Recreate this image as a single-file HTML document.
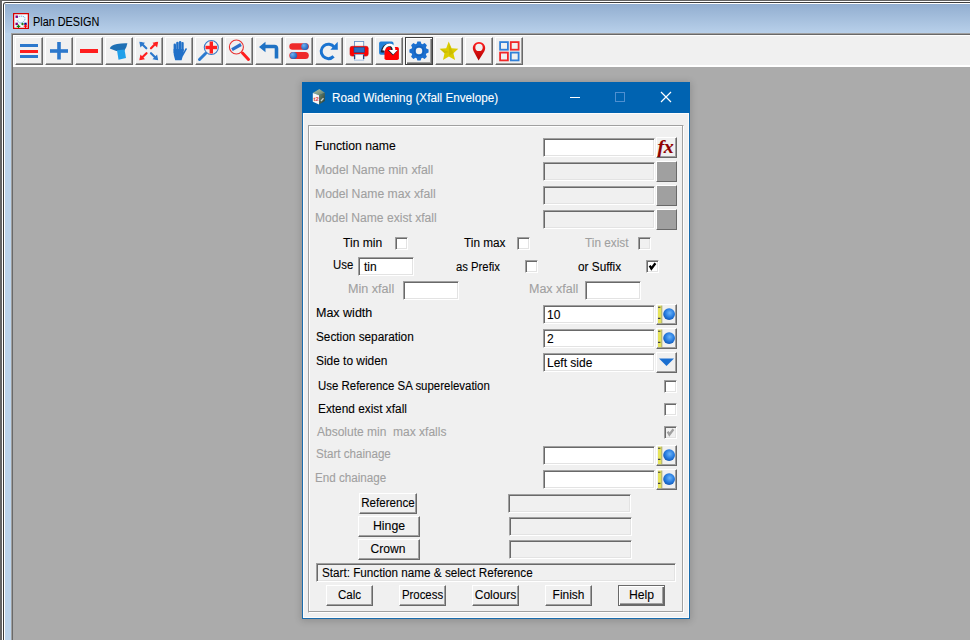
<!DOCTYPE html>
<html><head><meta charset="utf-8">
<style>
*{box-sizing:border-box;margin:0;padding:0}
html,body{width:970px;height:640px;overflow:hidden;background:#ababab;font-family:"Liberation Sans",sans-serif;font-size:12px;color:#000}
.a{position:absolute}
.t{position:absolute;white-space:pre;line-height:14px;font-size:12px;-webkit-text-stroke:0.1px currentColor}
.dis{color:#a0a0a0}
/* toolbar button */
.tb{position:absolute;top:37px;width:28px;height:28px;background:#f0f0f0;border-top:1px solid #fff;border-left:1px solid #fff;box-shadow:inset -1px -1px 0 #a0a0a0;border-right:1px solid #696969;border-bottom:1px solid #696969}
.tb svg{position:absolute;left:0;top:0}
/* sunken field */
.fld{position:absolute;background:#fff;border-top:1px solid #a0a0a0;border-left:1px solid #a0a0a0;border-right:1px solid #fff;border-bottom:1px solid #fff;box-shadow:inset 1px 1px 0 #696969,inset -1px -1px 0 #e3e3e3}
.fld.d{background:#f0f0f0}
/* raised button */
.btn{position:absolute;background:#f0f0f0;border-top:1px solid #fff;border-left:1px solid #fff;border-right:1px solid #696969;border-bottom:1px solid #696969;box-shadow:inset -1px -1px 0 #a0a0a0}
.chk{position:absolute;background:#fff;border-top:1px solid #a0a0a0;border-left:1px solid #a0a0a0;border-right:1px solid #fff;border-bottom:1px solid #fff;box-shadow:inset 1px 1px 0 #696969,inset -1px -1px 0 #e3e3e3}
.chk.d{background:#f0f0f0}
</style></head><body>
<!-- main window frame -->
<div class="a" style="left:0;top:0;width:970px;height:640px;background:#646464"></div>
<div class="a" style="left:2px;top:1px;width:968px;height:639px;background:#fff"></div>
<div class="a" style="left:3px;top:2px;width:967px;height:638px;background:#3c3c3c;border-top-left-radius:3px"></div>
<div class="a" style="left:4px;top:3px;width:966px;height:637px;background:#fff;border-top-left-radius:2px"></div>
<div class="a" style="left:5px;top:4px;width:965px;height:636px;background:#bcd4ec"></div>
<div class="a" style="left:5px;top:4px;width:965px;height:29px;background:linear-gradient(#92aed0,#b8d0ea)"></div>
<!-- title -->
<svg class="a" style="left:13px;top:13px" width="16" height="16">
<rect x="0.6" y="0.6" width="14.8" height="14.8" fill="#f4fbff" stroke="#d40000" stroke-width="1.3"/>
<path d="M4,4.5 Q7,2.5 10,3.5 Q13,4 11.5,7.5 Q10,10 7,10 Q5,9 4,7" fill="none" stroke="#58a0d8" stroke-width="1" stroke-dasharray="1.2 0.8"/>
<rect x="2.5" y="2.5" width="2.4" height="2.4" fill="#800080"/>
<rect x="2.5" y="9.7" width="2.4" height="2.4" fill="#800080"/>
<rect x="11.3" y="9.7" width="2.4" height="2.4" fill="#000090"/>
<circle cx="9.5" cy="11" r="1.2" fill="#208020"/>
<path d="M5.5,11.5v3.6M3.7,13.3h3.6" stroke="#108010" stroke-width="1.2"/>
<path d="M12.5,11.3v3.6M10.7,13.1h3.6" stroke="#ff0000" stroke-width="1.2"/>
</svg>
<div class="t" style="left:33px;top:15px;font-size:12px;color:#000;transform:scaleX(0.905);transform-origin:0 0">Plan DESIGN</div>
<!-- toolbar container -->
<div class="a" style="left:11px;top:33px;width:959px;height:607px;background:#a0a0a0"></div>
<div class="a" style="left:12px;top:34px;width:958px;height:606px;background:#696969"></div>
<div class="a" style="left:13px;top:35px;width:957px;height:32px;background:#fff"></div>
<div class="a" style="left:14px;top:36px;width:956px;height:29px;background:#f0f0f0"></div>
<div class="a" style="left:13px;top:67px;width:957px;height:573px;background:#ababab"></div>
<div id="tools">
<div class="tb" style="left:15px"></div>
<div class="tb" style="left:45px"></div>
<div class="tb" style="left:75px"></div>
<div class="tb" style="left:105px"></div>
<div class="tb" style="left:135px"></div>
<div class="tb" style="left:165px"></div>
<div class="tb" style="left:195px"></div>
<div class="tb" style="left:225px"></div>
<div class="tb" style="left:255px"></div>
<div class="tb" style="left:285px"></div>
<div class="tb" style="left:315px"></div>
<div class="tb" style="left:345px"></div>
<div class="tb" style="left:375px"></div>
<div class="tb" style="left:405px;border:1px solid #404040;box-shadow:inset 1px 1px 0 #fff,inset -1px -1px 0 #696969,inset -2px -2px 0 #a0a0a0"></div>
<div class="tb" style="left:435px"></div>
<div class="tb" style="left:465px"></div>
<div class="tb" style="left:495px"></div>
<svg class="a" style="left:0;top:0" width="970" height="70">
<defs>
<radialGradient id="bb" cx="0.35" cy="0.35" r="0.7"><stop offset="0" stop-color="#6fb0f0"/><stop offset="1" stop-color="#1a5fb8"/></radialGradient>
<linearGradient id="pin" x1="0" y1="0" x2="0" y2="1"><stop offset="0" stop-color="#ff2020"/><stop offset="1" stop-color="#b00000"/></linearGradient>
</defs>
<rect x="20" y="44" width="18" height="3" fill="#2c78cc"/><rect x="20" y="50" width="18" height="3" fill="#ff1e1e"/><rect x="20" y="55" width="18" height="3" fill="#2c78cc"/>
<rect x="50" y="49.2" width="18" height="3.6" fill="#2c78cc"/><rect x="57.2" y="42" width="3.6" height="17.5" fill="#2c78cc"/>
<rect x="80" y="49" width="18" height="4" fill="#ff1e1e"/>
<path d="M109.8,48.4 Q110.5,45.2 117,44 Q122,43.1 127.4,43.3 Q126.8,47.5 124.2,51 Q116,51.8 109.8,48.4Z" fill="#1f70b4"/>
<path d="M117,50.3 L124.5,49.6 L126,58 L118.5,59.8Z" fill="#20a0ea"/>
<g stroke-width="2.2" stroke-linecap="round">
<path d="M146.3,48.3 L141,43" stroke="#2c78cc"/><path d="M139.3,41.7 L145,42.8 L140.4,47.4Z" fill="#2c78cc"/>
<path d="M151,48.3 L156.3,43" stroke="#ff1e1e"/><path d="M158.2,41.7 L152.5,42.8 L157.1,47.4Z" fill="#ff1e1e"/>
<path d="M146.5,53.2 L141,58.5" stroke="#ff1e1e"/><path d="M139.3,60.3 L140.4,54.6 L145,59.2Z" fill="#ff1e1e"/>
<path d="M151,53.2 L156.3,58.5" stroke="#2c78cc"/><path d="M158.2,60.3 L157.1,54.6 L152.5,59.2Z" fill="#2c78cc"/>
</g>
<g fill="#2170c8"><rect x="173.6" y="43.6" width="2.4" height="10" rx="1.2"/><rect x="176.2" y="41.8" width="2.5" height="10" rx="1.25"/><rect x="178.9" y="40.9" width="2.5" height="10" rx="1.25"/><rect x="181.4" y="41.9" width="2.3" height="10" rx="1.15"/>
<path d="M173.6,49 L183.7,49 L183.5,52.5 L185.3,48.6 Q186.6,47.6 187,48.9 L182.6,56.8 L181.6,60.2 L175.2,60.2 L173.8,55Z"/></g>
<circle cx="211.3" cy="47.5" r="7" fill="none" stroke="#3a7ac8" stroke-width="1.1"/>
<rect x="205.5" y="45.8" width="11.5" height="3.4" fill="#ff1e1e"/><rect x="209.6" y="41.5" width="3.4" height="12" fill="#ff1e1e"/>
<path d="M199.5,59.5 L205.5,53.5" stroke="#2a7ad0" stroke-width="3" stroke-linecap="round"/>
<circle cx="236.4" cy="47" r="7" fill="none" stroke="#e83030" stroke-width="1.1"/>
<path d="M232,49.6 L241,44.5" stroke="#2a70c8" stroke-width="3.2"/>
<path d="M242.5,53 L248.5,59.5" stroke="#ff1e1e" stroke-width="3" stroke-linecap="round"/>
<path d="M276.5,58.5 L276.5,48.5 Q276.5,46.5 274.5,46.5 L264,46.5" fill="none" stroke="#1f72c4" stroke-width="3.6"/>
<path d="M259,47 L265.5,41.8 L265.5,52.2Z" fill="#1f72c4"/>
<rect x="289.3" y="43.3" width="19.5" height="6.5" rx="3.25" fill="#ee2a2a"/><circle cx="304.8" cy="46.5" r="3.6" fill="url(#bb)"/>
<rect x="289.3" y="52" width="19.5" height="7" rx="3.5" fill="#ee2a2a"/><circle cx="293.5" cy="55.5" r="3.6" fill="url(#bb)"/>
<path d="M334.2,47.2 A7.2,7.2 0 1 0 333.6,56.4" fill="none" stroke="#1a73d0" stroke-width="3"/>
<path d="M337.7,41.8 L337.8,49.8 L330.4,49.8Z" fill="#1a73d0"/>
<rect x="354.5" y="41.5" width="9.2" height="6" fill="#f8f8f8" stroke="#6a94c8" stroke-width="0.9"/>
<rect x="350" y="46.3" width="18.2" height="9.8" rx="2" fill="#ff0000" stroke="#c01010" stroke-width="0.6"/>
<rect x="354" y="47.3" width="10.4" height="5" fill="#2a70c0" stroke="#184c90" stroke-width="0.6"/>
<rect x="354.5" y="54.5" width="9.2" height="5.6" fill="#f8f8f8" stroke="#8fb0d8" stroke-width="0.8"/>
<path d="M354.6,54.5V59M363.6,54.5V59" stroke="#27457a" stroke-width="1.3"/>
<rect x="379.1" y="41.4" width="14.4" height="13.3" rx="1.8" fill="#2080d8"/>
<rect x="384.5" y="47" width="14.4" height="13" rx="1.8" fill="#ff0000"/>
<path d="M382,52.5 Q383.5,45.5 389,45.2 Q392.6,45.5 392.8,50.5" fill="none" stroke="#182838" stroke-width="3.2"/>
<path d="M383.6,50.5 Q385,45.2 389.5,44.8 Q394,45 394,50.5" fill="none" stroke="#fff" stroke-width="2.6"/>
<path d="M387.6,50 L398,50 L393,55.5Z" fill="#182838"/>
<path d="M388.8,50 L397.6,50 L393.2,54.6Z" fill="#fff"/>
<path d="M416.62,43.68 L417.41,41.43 L420.59,41.43 L421.38,43.68 L421.93,43.92 L422.50,44.14 L424.64,43.11 L426.89,45.36 L425.86,47.50 L426.08,48.07 L426.32,48.62 L428.57,49.41 L428.57,52.59 L426.32,53.38 L426.08,53.93 L425.86,54.50 L426.89,56.64 L424.64,58.89 L422.50,57.86 L421.93,58.08 L421.38,58.32 L420.59,60.57 L417.41,60.57 L416.62,58.32 L416.07,58.08 L415.50,57.86 L413.36,58.89 L411.11,56.64 L412.14,54.50 L411.92,53.93 L411.68,53.38 L409.43,52.59 L409.43,49.41 L411.68,48.62 L411.92,48.07 L412.14,47.50 L411.11,45.36 L413.36,43.11 L415.50,44.14 L416.07,43.92Z M419,47.8 A3.2,3.2 0 1 0 419,54.2 A3.2,3.2 0 1 0 419,47.8Z" fill="#1a6fd0" fill-rule="evenodd"/><circle cx="419" cy="51" r="4.6" fill="none" stroke="#1458a8" stroke-width="1.2" opacity="0.6"/>
<path d="M448.7,41.6 L451.6,48.3 L458.3,48.8 L453.4,53.2 L455.1,60 L448.9,56.4 L443,60 L444.5,53.2 L439.6,48.8 L446.2,48.3Z" fill="#dccc00"/>
<path d="M448.8,44 L449.2,55.5 L453.6,53.3Z M440.5,49 L449,52 L444.5,53.2Z" fill="#c0b000" opacity="0.55"/>
<path d="M478.6,60.6 L473.6,51.2 A6.2,6.2 0 1 1 484.4,51.2Z" fill="url(#pin)"/>
<circle cx="479" cy="47.4" r="3.7" fill="#f0f0f0"/>
<g fill="none" stroke-width="1.8">
<rect x="500.1" y="42.1" width="7.8" height="7.6" stroke="#3080d8"/>
<rect x="510.8" y="42.1" width="7.8" height="7.6" stroke="#f02828"/>
<rect x="500.1" y="52.6" width="7.8" height="7.8" stroke="#f02828"/>
<rect x="510.8" y="52.6" width="7.8" height="7.8" stroke="#3080d8"/>
</g>
</svg>
</div><!--/tools-->

<!-- dialog -->
<div class="a" style="left:302px;top:82px;width:388px;height:537px;background:#1a6cad;box-shadow:0 1px 7px 1px rgba(0,0,0,0.16)"></div>
<div class="a" style="left:302px;top:82px;width:388px;height:31px;background:#0063b1"></div>
<div class="a" style="left:303px;top:113px;width:386px;height:505px;background:#f0f0f0;border-top:1px solid #fcfcfc;border-left:1px solid #fcfcfc;border-right:1px solid #fcfcfc;border-bottom:1px solid #fcfcfc"></div>
<svg class="a" style="left:310px;top:86px" width="20" height="20">
<defs><linearGradient id="cubeR" x1="0" y1="0" x2="1" y2="1"><stop offset="0" stop-color="#6a8870"/><stop offset="1" stop-color="#2a3a30"/></linearGradient>
<linearGradient id="cubeT" x1="0" y1="0" x2="1" y2="1"><stop offset="0" stop-color="#b0c8b0"/><stop offset="1" stop-color="#607860"/></linearGradient></defs>
<path d="M9.4,3.1 L14.8,6.7 L9,9.2 L2.8,7Z" fill="url(#cubeT)"/>
<path d="M2.8,7 L9,9.2 L9,18.4 L2.8,15.8Z" fill="#f6f6f6"/>
<path d="M9,9.2 L14.8,6.7 L14.8,15 L9,18.4Z" fill="url(#cubeR)"/>
<path d="M11,15 L13.5,12.2" stroke="#c8d0c8" stroke-width="1.3"/>
<text x="3.4" y="14.6" font-family="Liberation Sans" font-size="6" font-weight="bold" fill="#e04040">t2</text>
</svg>
<div class="t" style="left:332.4px;top:91px;color:#fff;font-size:12px;transform:scaleX(0.977);transform-origin:0 0">Road Widening (Xfall Envelope)</div>
<div class="a" style="left:570px;top:97px;width:10px;height:1px;background:#fff"></div>
<div class="a" style="left:615px;top:92px;width:10px;height:10px;border:1px solid #4f8fd0"></div>
<svg class="a" style="left:660px;top:91px" width="12" height="12"><path d="M1 1L11 11M11 1L1 11" stroke="#fff" stroke-width="1.2"/></svg>
<!-- group box -->
<div class="a" style="left:308px;top:125px;width:376px;height:488px;border-top:1px solid #a0a0a0;border-left:1px solid #a0a0a0;border-right:1px solid #fff;border-bottom:1px solid #fff;box-shadow:inset -1px -1px 0 #a0a0a0,inset 1px 1px 0 #fff"></div>

<div id="form">
<div class="t " style="left:315px;top:139px;font-size:12px;transform:scaleX(1.0167);transform-origin:0 0">Function name</div>
<div class="fld" style="left:543px;top:138px;width:112px;height:19px;"></div>
<div class="btn" style="left:656px;top:137px;width:21px;height:21px;"></div>
<div class="t" style="left:657.5px;top:136px;font-family:'Liberation Serif';font-style:italic;font-weight:bold;font-size:20px;line-height:22px;color:#900000;letter-spacing:-0.5px;transform:scaleY(0.92);transform-origin:0 0">fx</div>
<div class="t dis" style="left:314.6px;top:163px;font-size:12px;transform:scaleX(1.0250);transform-origin:0 0">Model Name min xfall</div>
<div class="fld d" style="left:543px;top:162px;width:112px;height:19px;"></div>
<div class="btn" style="left:656px;top:161px;width:21px;height:21px;background:#a0a0a0"></div>
<div class="t dis" style="left:314.6px;top:187px;font-size:12px;transform:scaleX(1.0167);transform-origin:0 0">Model Name max xfall</div>
<div class="fld d" style="left:543px;top:186px;width:112px;height:19px;"></div>
<div class="btn" style="left:656px;top:185px;width:21px;height:21px;background:#a0a0a0"></div>
<div class="t dis" style="left:314.6px;top:211px;font-size:12px;transform:scaleX(1.0083);transform-origin:0 0">Model Name exist xfall</div>
<div class="fld d" style="left:543px;top:210px;width:112px;height:19px;"></div>
<div class="btn" style="left:656px;top:209px;width:21px;height:21px;background:#a0a0a0"></div>
<div class="t " style="left:343px;top:236px;font-size:12px;transform:scaleX(1.0083);transform-origin:0 0">Tin min</div>
<div class="chk" style="left:395px;top:237px;width:13px;height:13px;"></div>
<div class="t " style="left:464.4px;top:236px;font-size:12px;transform:scaleX(0.9833);transform-origin:0 0">Tin max</div>
<div class="chk" style="left:517px;top:237px;width:13px;height:13px;"></div>
<div class="t dis" style="left:585px;top:236px;font-size:12px;transform:scaleX(0.9833);transform-origin:0 0">Tin exist</div>
<div class="chk d" style="left:638px;top:237px;width:13px;height:13px;"></div>
<div class="t " style="left:333px;top:258px;font-size:12px;transform:scaleX(0.9500);transform-origin:0 0">Use</div>
<div class="fld" style="left:358px;top:257px;width:56px;height:19px;"></div>
<div class="t " style="left:364px;top:260px;font-size:12px">tin</div>
<div class="t " style="left:456.3px;top:260px;font-size:12px;transform:scaleX(0.9417);transform-origin:0 0">as Prefix</div>
<div class="chk" style="left:525px;top:260px;width:13px;height:13px;"></div>
<div class="t " style="left:577.7px;top:260px;font-size:12px;transform:scaleX(0.9833);transform-origin:0 0">or Suffix</div>
<div class="chk" style="left:646px;top:260px;width:13px;height:13px;"></div>
<svg class="a" style="left:646px;top:260px" width="13" height="13"><path d="M3.7,5.6 L5.4,8.6 L9.4,3.2" fill="none" stroke="#000" stroke-width="2.3" stroke-linejoin="miter"/></svg>
<div class="t dis" style="left:348px;top:282px;font-size:12px;transform:scaleX(1.0500);transform-origin:0 0">Min xfall</div>
<div class="fld" style="left:403px;top:281px;width:56px;height:19px;"></div>
<div class="t dis" style="left:529.2px;top:282px;font-size:12px;transform:scaleX(1.0417);transform-origin:0 0">Max xfall</div>
<div class="fld" style="left:585px;top:281px;width:56px;height:19px;"></div>
<div class="t " style="left:315.5px;top:306px;font-size:12px;transform:scaleX(1.0417);transform-origin:0 0">Max width</div>
<div class="fld" style="left:543px;top:305px;width:112px;height:19px;"></div>
<div class="t " style="left:547px;top:308px;font-size:12px">10</div>
<div class="btn" style="left:656px;top:304px;width:21px;height:21px;"></div>
<svg class="a" style="left:656px;top:304px" width="21" height="21"><rect x="2" y="1.6" width="3.6" height="17.6" fill="#e6e45a"/><path d="M5.8,1.6V19.2" stroke="#9a9a50" stroke-width="0.8"/><path d="M2,3.3h2.4M2,14.4h2.4" stroke="#404040" stroke-width="1.1"/><defs><radialGradient id="g" cx="0.55" cy="0.4" r="0.65"><stop offset="0" stop-color="#6ab4f8"/><stop offset="0.55" stop-color="#2a7ee0"/><stop offset="1" stop-color="#0c52b0"/></radialGradient></defs><circle cx="13.1" cy="10.1" r="5.9" fill="url(#g)"/></svg>
<div class="t " style="left:315.5px;top:330px;font-size:12px;transform:scaleX(0.9833);transform-origin:0 0">Section separation</div>
<div class="fld" style="left:543px;top:329px;width:112px;height:19px;"></div>
<div class="t " style="left:547px;top:332px;font-size:12px">2</div>
<div class="btn" style="left:656px;top:328px;width:21px;height:21px;"></div>
<svg class="a" style="left:656px;top:328px" width="21" height="21"><rect x="2" y="1.6" width="3.6" height="17.6" fill="#e6e45a"/><path d="M5.8,1.6V19.2" stroke="#9a9a50" stroke-width="0.8"/><path d="M2,3.3h2.4M2,14.4h2.4" stroke="#404040" stroke-width="1.1"/><defs><radialGradient id="g" cx="0.55" cy="0.4" r="0.65"><stop offset="0" stop-color="#6ab4f8"/><stop offset="0.55" stop-color="#2a7ee0"/><stop offset="1" stop-color="#0c52b0"/></radialGradient></defs><circle cx="13.1" cy="10.1" r="5.9" fill="url(#g)"/></svg>
<div class="t " style="left:315.5px;top:354px;font-size:12px;transform:scaleX(0.9917);transform-origin:0 0">Side to widen</div>
<div class="fld" style="left:543px;top:353px;width:112px;height:19px;"></div>
<div class="t " style="left:547px;top:356px;font-size:12px">Left side</div>
<div class="btn" style="left:656px;top:352px;width:21px;height:21px;"></div>
<svg class="a" style="left:656px;top:352px" width="21" height="20"><path d="M3 6.5H18L10.5 14Z" fill="#1a6fd0"/></svg>
<div class="t " style="left:318px;top:379px;font-size:12px;transform:scaleX(0.9542);transform-origin:0 0">Use Reference SA superelevation</div>
<div class="chk" style="left:664px;top:380px;width:13px;height:13px;"></div>
<div class="t " style="left:318px;top:402px;font-size:12px;transform:scaleX(0.9875);transform-origin:0 0">Extend exist xfall</div>
<div class="chk" style="left:664px;top:403px;width:13px;height:13px;"></div>
<div class="t dis" style="left:317px;top:425px;font-size:12px">Absolute min  max xfalls</div>
<div class="chk d" style="left:664px;top:426px;width:13px;height:13px;"></div>
<svg class="a" style="left:664px;top:426px" width="13" height="13"><path d="M3.7,5.6 L5.4,8.6 L9.4,3.2" fill="none" stroke="#a0a0a0" stroke-width="2.3" stroke-linejoin="miter"/></svg>
<div class="t dis" style="left:316px;top:447px;font-size:12px;transform:scaleX(0.9667);transform-origin:0 0">Start chainage</div>
<div class="fld" style="left:543px;top:446px;width:112px;height:19px;"></div>
<div class="btn" style="left:656px;top:445px;width:21px;height:21px;"></div>
<svg class="a" style="left:656px;top:445px" width="21" height="21"><rect x="2" y="1.6" width="3.6" height="17.6" fill="#e6e45a"/><path d="M5.8,1.6V19.2" stroke="#9a9a50" stroke-width="0.8"/><path d="M2,3.3h2.4M2,14.4h2.4" stroke="#404040" stroke-width="1.1"/><defs><radialGradient id="g" cx="0.55" cy="0.4" r="0.65"><stop offset="0" stop-color="#6ab4f8"/><stop offset="0.55" stop-color="#2a7ee0"/><stop offset="1" stop-color="#0c52b0"/></radialGradient></defs><circle cx="13.1" cy="10.1" r="5.9" fill="url(#g)"/></svg>
<div class="t dis" style="left:315.2px;top:471px;font-size:12px;transform:scaleX(0.9708);transform-origin:0 0">End chainage</div>
<div class="fld" style="left:543px;top:470px;width:112px;height:19px;"></div>
<div class="btn" style="left:656px;top:469px;width:21px;height:21px;"></div>
<svg class="a" style="left:656px;top:469px" width="21" height="21"><rect x="2" y="1.6" width="3.6" height="17.6" fill="#e6e45a"/><path d="M5.8,1.6V19.2" stroke="#9a9a50" stroke-width="0.8"/><path d="M2,3.3h2.4M2,14.4h2.4" stroke="#404040" stroke-width="1.1"/><defs><radialGradient id="g" cx="0.55" cy="0.4" r="0.65"><stop offset="0" stop-color="#6ab4f8"/><stop offset="0.55" stop-color="#2a7ee0"/><stop offset="1" stop-color="#0c52b0"/></radialGradient></defs><circle cx="13.1" cy="10.1" r="5.9" fill="url(#g)"/></svg>
<div class="btn" style="left:359px;top:493px;width:58px;height:21px;"></div>
<div class="t " style="left:359px;top:496px;font-size:12px;transform:scaleX(0.9667);transform-origin:50% 0;width:58px;text-align:center">Reference</div>
<div class="fld d" style="left:508px;top:494px;width:123px;height:19px;"></div>
<div class="btn" style="left:358px;top:516px;width:62px;height:21px;"></div>
<div class="t " style="left:358px;top:519px;font-size:12px;transform:scaleX(1.0250);transform-origin:50% 0;width:62px;text-align:center">Hinge</div>
<div class="fld d" style="left:509px;top:517px;width:123px;height:19px;"></div>
<div class="btn" style="left:358px;top:539px;width:62px;height:21px;"></div>
<div class="t " style="left:356.8px;top:542px;font-size:12px;transform:scaleX(1.0083);transform-origin:50% 0;width:62px;text-align:center">Crown</div>
<div class="fld d" style="left:509px;top:540px;width:123px;height:19px;"></div>
<div class="fld d" style="left:316px;top:563px;width:360px;height:19px;"></div>
<div class="t " style="left:322.4px;top:566px;font-size:12px;transform:scaleX(0.9750);transform-origin:0 0">Start: Function name &amp; select Reference</div>
<div class="btn" style="left:326px;top:585px;width:47px;height:21px;"></div>
<div class="t " style="left:326px;top:588px;font-size:12px;transform:scaleX(0.9667);transform-origin:50% 0;width:47px;text-align:center">Calc</div>
<div class="btn" style="left:399px;top:585px;width:47px;height:21px;"></div>
<div class="t " style="left:399px;top:588px;font-size:12px;transform:scaleX(0.9500);transform-origin:50% 0;width:47px;text-align:center">Process</div>
<div class="btn" style="left:472px;top:585px;width:47px;height:21px;"></div>
<div class="t " style="left:472px;top:588px;font-size:12px;transform:scaleX(1.0083);transform-origin:50% 0;width:47px;text-align:center">Colours</div>
<div class="btn" style="left:545px;top:585px;width:47px;height:21px;"></div>
<div class="t " style="left:545px;top:588px;font-size:12px;transform:scaleX(0.9917);transform-origin:50% 0;width:47px;text-align:center">Finish</div>
<div class="btn" style="left:618px;top:585px;width:47px;height:21px;border:1px solid #696969;box-shadow:inset 1px 1px 0 #fff,inset -1px -1px 0 #696969,inset -2px -2px 0 #a0a0a0"></div>
<div class="t " style="left:618px;top:588px;font-size:12px;transform:scaleX(1.0167);transform-origin:50% 0;width:47px;text-align:center">Help</div>
</div><!--/form-->
</body></html>
